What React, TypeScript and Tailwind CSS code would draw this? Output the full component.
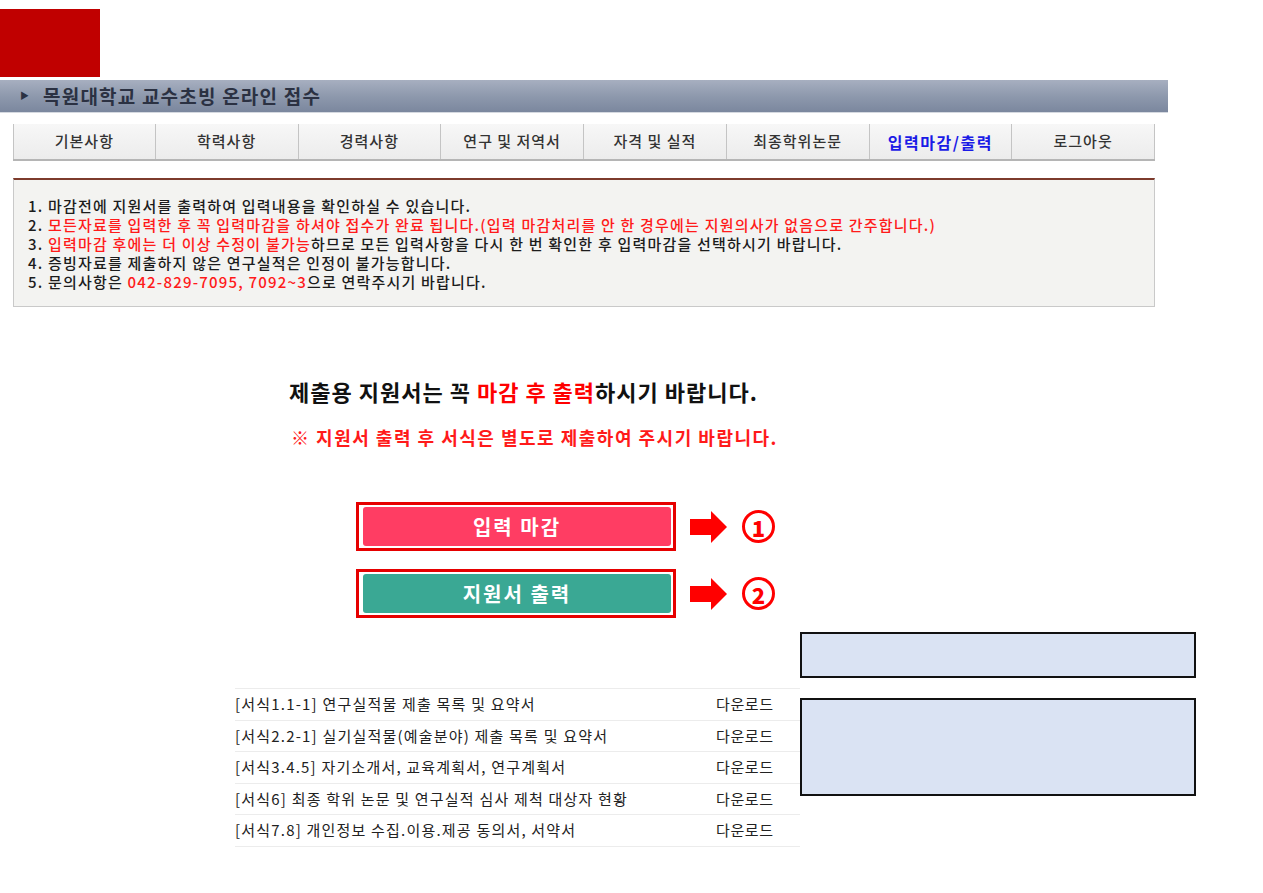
import React from "react";

const tabs = [
  "기본사항",
  "학력사항",
  "경력사항",
  "연구 및 저역서",
  "자격 및 실적",
  "최종학위논문",
  "입력마감/출력",
  "로그아웃",
];

const forms = [
  "[서식1.1-1] 연구실적물 제출 목록 및 요약서",
  "[서식2.2-1] 실기실적물(예술분야) 제출 목록 및 요약서",
  "[서식3.4.5] 자기소개서, 교육계획서, 연구계획서",
  "[서식6] 최종 학위 논문 및 연구실적 심사 제척 대상자 현황",
  "[서식7.8] 개인정보 수집.이용.제공 동의서, 서약서",
];

function Arrow() {
  return (
    <svg width="38" height="32" viewBox="0 0 38 32" className="shrink-0">
      <path d="M0 8 H21 V0 L37 16 L21 32 V24 H0 Z" fill="#ff0000" />
    </svg>
  );
}

function Circled({ n }: { n: string }) {
  return (
    <div className="flex h-[33px] w-[33px] items-center justify-center rounded-full border-[3px] border-[#ff0000] text-[22px] font-black leading-none text-[#ff0000]">
      {n}
    </div>
  );
}

function ActionButton({ label, color, n }: { label: string; color: string; n: string }) {
  return (
    <div className="flex items-center">
      <div className="h-[49px] w-[320px] border-[3px] border-[#e60000] bg-white p-[2px] pl-[4px]">
        <div
          className={`flex h-full w-full items-center justify-center rounded-[3px] text-[20px] font-bold tracking-[2px] text-white ${color}`}
        >
          {label}
        </div>
      </div>
      <div className="ml-[14px]">
        <Arrow />
      </div>
      <div className="ml-[14px]">
        <Circled n={n} />
      </div>
    </div>
  );
}

export default function App() {
  return (
    <div
      className="min-h-[893px] w-[1263px] bg-white text-[#222]"
      style={{ fontFamily: '"Noto Sans CJK KR", "Noto Sans", sans-serif' }}
    >
      <div className="pt-[9px]">
        <div className="h-[68px] w-[100px] bg-[#c00000]" />
      </div>

      {/* title bar */}
      <div className="mt-[3px] flex h-[33px] w-[1168px] items-center border-b border-[#d5d9e0] bg-gradient-to-b from-[#a7afc0] via-[#8e99ad] to-[#7b879e] pl-[20px]">
        <span className="text-[9px] text-[#2b3142]">▶</span>
        <span className="ml-[14px] text-[19px] font-bold tracking-[1.2px] text-[#2b3142]">
          목원대학교 교수초빙 온라인 접수
        </span>
      </div>

      {/* tabs */}
      <div className="ml-[13px] mt-[11px] grid h-[37px] w-[1142px] grid-cols-8 border-b-2 border-[#b5b5b5] bg-gradient-to-b from-[#f7f7f7] to-[#ececec]">
        {tabs.map((t, i) => (
          <div
            key={t}
            className={`flex items-center justify-center border-r border-[#c4c4c4] ${
              i === 0 ? "border-l" : ""
            } ${
              i === 6
                ? "text-[16px] font-bold tracking-[1.5px] text-[#1a1ae6]"
                : "text-[15px] font-medium tracking-[1px] text-[#333]"
            }`}
          >
            {t}
          </div>
        ))}
      </div>

      {/* notice */}
      <div className="ml-[13px] mt-[17px] h-[129px] w-[1142px] border border-t-2 border-[#c9c9c9] border-t-[#7d3b2c] bg-[#f3f3f1] pl-[14px] pt-[16px] text-[15px] font-medium leading-[19px] tracking-[1.2px] text-[#1c1c1c]">
        <p>1. 마감전에 지원서를 출력하여 입력내용을 확인하실 수 있습니다.</p>
        <p>
          2.{" "}
          <span className="text-[#ff1a1a]">
            모든자료를 입력한 후 꼭 입력마감을 하셔야 접수가 완료 됩니다.(입력 마감처리를 안 한 경우에는 지원의사가 없음으로 간주합니다.)
          </span>
        </p>
        <p>
          3. <span className="text-[#ff1a1a]">입력마감 후에는 더 이상 수정이 불가능</span>하므로 모든 입력사항을 다시 한 번 확인한 후 입력마감을 선택하시기 바랍니다.
        </p>
        <p>4. 증빙자료를 제출하지 않은 연구실적은 인정이 불가능합니다.</p>
        <p>
          5. 문의사항은 <span className="text-[#ff1a1a]">042-829-7095, 7092~3</span>으로 연락주시기 바랍니다.
        </p>
      </div>

      {/* guidance */}
      <div className="ml-[289px] mt-[70px] text-[22px] font-bold leading-[28px] tracking-[1px] text-[#111]">
        제출용 지원서는 꼭 <span className="text-[#ff0000]">마감 후 출력</span>하시기 바랍니다.
      </div>
      <div className="ml-[291px] mt-[20px] text-[18px] font-bold leading-[24px] tracking-[1.5px] text-[#ff1a1a]">
        ※ 지원서 출력 후 서식은 별도로 제출하여 주시기 바랍니다.
      </div>

      <div className="ml-[356px] mt-[53px] flex flex-col gap-[18px]">
        <ActionButton label="입력 마감" color="bg-[#ff3d63]" n="1" />
        <ActionButton label="지원서 출력" color="bg-[#3aa894]" n="2" />
      </div>

      {/* forms + note boxes */}
      <div className="mt-[14px] flex items-start">
        <div className="ml-[235px] mt-[56px] w-[565px] border-b border-[#ececec]">
          {forms.map((f) => (
            <div
              key={f}
              className="grid h-[31.6px] grid-cols-[481px_1fr] items-center border-t border-[#ececec] text-[15px] tracking-[1.2px] text-[#222]"
            >
              <span>{f}</span>
              <span className="tracking-[0.6px]">다운로드</span>
            </div>
          ))}
        </div>
        <div className="w-[396px]">
          <div className="h-[46px] border-2 border-[#111] bg-[#dae3f3]" />
          <div className="mt-[20px] h-[98px] border-2 border-[#111] bg-[#dae3f3]" />
        </div>
      </div>
    </div>
  );
}
